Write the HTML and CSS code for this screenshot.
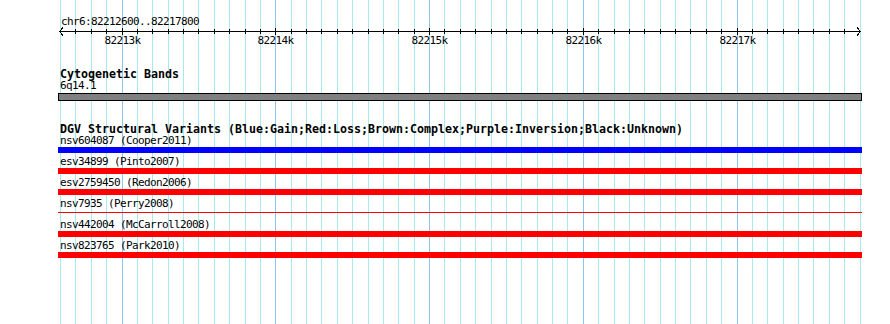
FILE: index.html
```html
<!DOCTYPE html>
<html lang="en">
<head>
  <meta charset="UTF-8" />
  <title>chr6:82212600..82217800</title>
  <link rel="stylesheet" href="styles.css">
</head>
<body>
  <div class="canvas">
    <!-- grid behind the tracks, filled by the script -->
    <svg class="grid" id="grid" width="890" height="324"></svg>

    <div class="tracks">
      <section class="ruler">
        <div class="ruler-name">chr6:82212600..82217800</div>
        <svg class="axis" id="axis" width="890" height="19"></svg>
      </section>

      <section class="track track-bands">
        <div class="track-title">Cytogenetic Bands</div>
        <div class="feature">
          <div class="feat-label">6q14.1</div>
          <div class="band"></div>
        </div>
      </section>

      <section class="track track-dgv">
        <div class="track-title">DGV Structural Variants (Blue:Gain;Red:Loss;Brown:Complex;Purple:Inversion;Black:Unknown)</div>
        <div class="feature">
          <div class="feat-label">nsv604087 (Cooper2011)</div>
          <div class="bar gain"></div>
        </div>
        <div class="feature">
          <div class="feat-label">esv34899 (Pinto2007)</div>
          <div class="bar loss"></div>
        </div>
        <div class="feature">
          <div class="feat-label">esv2759450 (Redon2006)</div>
          <div class="bar loss"></div>
        </div>
        <div class="feature">
          <div class="feat-label">nsv7935 (Perry2008)</div>
          <div class="bar loss thin"></div>
        </div>
        <div class="feature">
          <div class="feat-label">nsv442004 (McCarroll2008)</div>
          <div class="bar loss"></div>
        </div>
        <div class="feature">
          <div class="feat-label">nsv823765 (Park2010)</div>
          <div class="bar loss"></div>
        </div>
      </section>
    </div>
  </div>

  <script>
    const START = 82212600;
    const END = 82217800;
    const X0 = 60.5;
    const PX_PER_BP = 0.15375;
    const NS = "http://www.w3.org/2000/svg";

    const grid = document.getElementById("grid");
    const axis = document.getElementById("axis");

    function el(name, attrs) {
      const node = document.createElementNS(NS, name);
      for (const k in attrs) node.setAttribute(k, attrs[k]);
      return node;
    }

    // axis line + arrows
    axis.appendChild(el("line", { x1: 59, y1: 4.5, x2: 861, y2: 4.5, class: "axis-line" }));
    axis.appendChild(el("polyline", { points: "63,0.5 59.5,4.5 63,8.5", class: "axis-line" }));
    axis.appendChild(el("polyline", { points: "857,0.5 860.5,4.5 857,8.5", class: "axis-line" }));

    for (let bp = START; bp <= END; bp += 100) {
      const x = Math.floor(X0 + (bp - START) * PX_PER_BP) + 0.5;
      const major = bp % 1000 === 0;

      grid.appendChild(el("line", {
        x1: x, y1: 0, x2: x, y2: 324,
        class: major ? "grid-major" : "grid-minor"
      }));

      if (bp === START || bp === END) continue;
      axis.appendChild(el("line", {
        x1: x, y1: major ? 1 : 2, x2: x, y2: major ? 8 : 7,
        class: "axis-line"
      }));

      if (major) {
        const t = el("text", { x: x, y: 17, class: "tick-label" });
        t.textContent = (bp / 1000) + "k";
        axis.appendChild(t);
      }
    }
  </script>
</body>
</html>
```

FILE: styles.css
```css
body {
    margin: 0;
    background: #ffffff;
}

.canvas {
    position: relative;
    width: 890px;
    height: 324px;
    overflow: hidden;
    background: #ffffff;
    color: #000000;
    font-family: "DejaVu Sans Mono", "Liberation Mono", monospace;
    font-size: 11px;
    letter-spacing: -0.62px;
}

/* grid lines */
.grid {
    position: absolute;
    top: 0;
    left: 0;
    z-index: 0;
}

.grid-minor {
    stroke: #a6eaf0;
    stroke-width: 1;
    shape-rendering: crispEdges;
}

.grid-major {
    stroke: #8cc6e8;
    stroke-width: 1;
    shape-rendering: crispEdges;
}

.tracks {
    position: relative;
    z-index: 1;
    padding-top: 16px;
}

/* ruler */
.ruler-name {
    height: 11px;
    line-height: 11px;
    padding-left: 61px;
}

.axis {
    display: block;
}

.axis-line {
    stroke: #000000;
    stroke-width: 1;
    fill: none;
    shape-rendering: crispEdges;
}

.tick-label {
    font-family: "DejaVu Sans Mono", "Liberation Mono", monospace;
    font-size: 11px;
    letter-spacing: -0.62px;
    fill: #000000;
    text-anchor: middle;
}

/* tracks */
.track-bands {
    margin-top: 22px;
}

.track-dgv {
    margin-top: 19px;
}

.track-title {
    height: 12px;
    line-height: 12px;
    padding-left: 60px;
    font-size: 11.63px;
    letter-spacing: 0;
    font-weight: bold;
    white-space: nowrap;
}

.feature {
    padding-bottom: 3px;
}

.feat-label {
    height: 11px;
    line-height: 11px;
    padding-left: 60px;
    white-space: pre;
}

.band {
    box-sizing: border-box;
    width: 804px;
    height: 8px;
    margin: 2px 0 0 58px;
    border: 1px solid #000000;
    background: #808080;
}

.bar {
    width: 804px;
    height: 6px;
    margin: 1px 0 0 58px;
}

.bar.gain {
    background: #0000ff;
}

.bar.loss {
    background: #ff0000;
}

.bar.thin {
    height: 1px;
    margin-top: 3px;
    margin-bottom: 3px;
}
```
